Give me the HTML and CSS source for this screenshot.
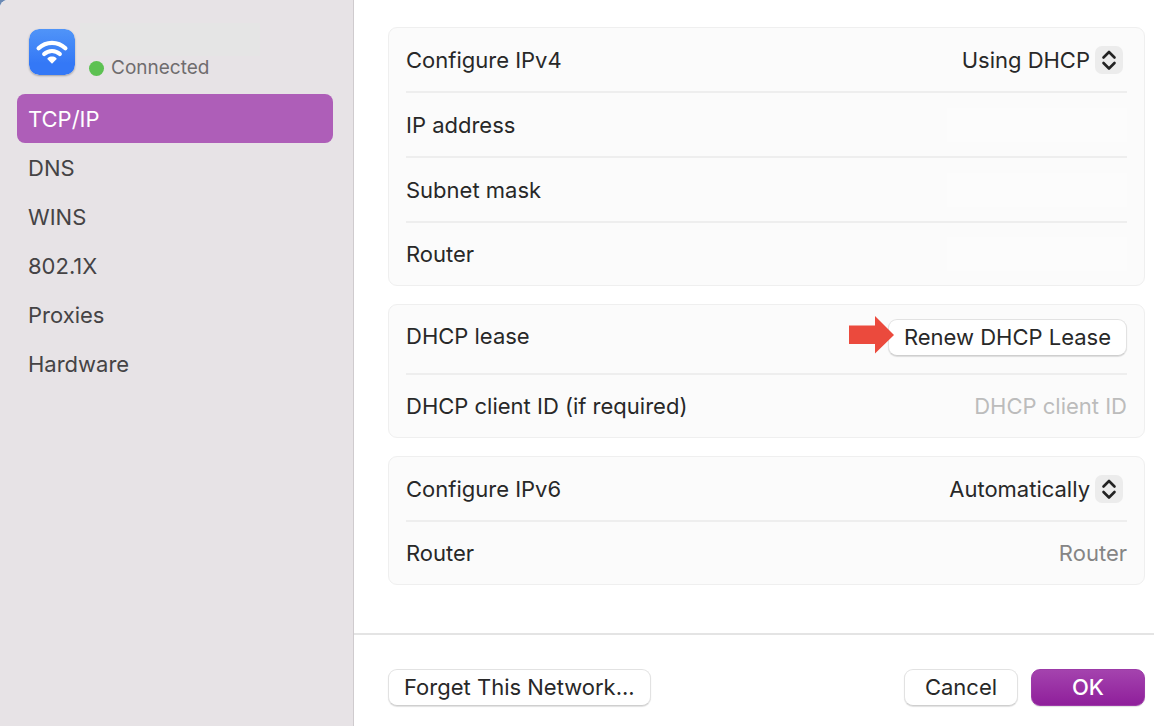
FILE: index.html
```html
<!DOCTYPE html>
<html lang="en">
<head>
    <meta charset="UTF-8">
    <meta name="viewport" content="width=device-width, initial-scale=1.0">
    <title>Wi-Fi - TCP/IP</title>
    <link rel="stylesheet" href="styles.css">
</head>
<body>
    <div class="window">
        <aside class="sidebar">
            <div class="network">
                <svg class="wifi-icon" viewBox="0 0 46 46" aria-hidden="true">
                    <defs>
                        <linearGradient id="wifiBlue" x1="0" y1="0" x2="0" y2="1">
                            <stop offset="0" stop-color="#5094f8"/>
                            <stop offset="0.75" stop-color="#3478f6"/>
                        </linearGradient>
                    </defs>
                    <rect width="46" height="46" rx="10" fill="url(#wifiBlue)"/>
                    <g fill="none" stroke="#fff" stroke-width="4.2" stroke-linecap="round">
                        <path d="M9.6 19.2a19.3 19.3 0 0 1 26.8 0"/>
                        <path d="M15.2 25.1a11.3 11.3 0 0 1 15.6 0"/>
                    </g>
                    <path d="M23 34.7l-4.200-4.200c-.5-.6-.5-1.200 0-1.600 2.400-1.800 6-1.800 8.400 0 .5.4.5 1 0 1.600z" fill="#fff"/>
                </svg>
                <div class="network-info">
                    <div class="network-name"></div>
                    <p class="status"><span class="status-dot"></span>Connected</p>
                </div>
            </div>

            <nav class="menu">
                <a href="#tcpip" class="active" aria-current="page">TCP/IP</a>
                <a href="#dns">DNS</a>
                <a href="#wins">WINS</a>
                <a href="#8021x">802.1X</a>
                <a href="#proxies">Proxies</a>
                <a href="#hardware">Hardware</a>
            </nav>
        </aside>

        <main class="main">
            <form class="settings" id="tcpip">
                <section class="panel">
                    <div class="row">
                        <label for="ipv4">Configure IPv4</label>
                        <div class="select">
                            <select id="ipv4">
                                <option>Using DHCP</option>
                            </select>
                            <svg class="chevrons" viewBox="0 0 28 28" aria-hidden="true">
                                <path d="M8.500 11.500L14 6l5.500 5.500M8.500 17l5.500 5.500 5.500-5.500"/>
                            </svg>
                        </div>
                    </div>
                    <div class="row">
                        <label for="ip">IP address</label>
                        <output id="ip" class="value"></output>
                    </div>
                    <div class="row">
                        <label for="subnet">Subnet mask</label>
                        <output id="subnet" class="value"></output>
                    </div>
                    <div class="row">
                        <label for="router4">Router</label>
                        <output id="router4" class="value"></output>
                    </div>
                </section>

                <section class="panel">
                    <div class="row lease">
                        <span>DHCP lease</span>
                        <div class="renew">
                            <svg class="arrow" viewBox="0 0 45 38" aria-hidden="true">
                                <path d="M0 9.500h26V0l19 19-19 18.500V28H0z"/>
                            </svg>
                            <button type="button" class="btn">Renew DHCP Lease</button>
                        </div>
                    </div>
                    <div class="row">
                        <label for="clientId">DHCP client ID (if required)</label>
                        <input type="text" id="clientId" placeholder="DHCP client ID">
                    </div>
                </section>

                <section class="panel">
                    <div class="row">
                        <label for="ipv6">Configure IPv6</label>
                        <div class="select">
                            <select id="ipv6">
                                <option>Automatically</option>
                            </select>
                            <svg class="chevrons" viewBox="0 0 28 28" aria-hidden="true">
                                <path d="M8.500 11.500L14 6l5.500 5.500M8.500 17l5.500 5.500 5.500-5.500"/>
                            </svg>
                        </div>
                    </div>
                    <div class="row">
                        <label for="router6">Router</label>
                        <output id="router6" class="muted">Router</output>
                    </div>
                </section>
            </form>

            <footer class="footer">
                <button type="button" class="btn forget">Forget This Network...</button>
                <button type="button" class="btn wide">Cancel</button>
                <button type="submit" form="tcpip" class="btn wide primary">OK</button>
            </footer>
        </main>
    </div>
</body>
</html>
```
FILE: styles.css
```css
* {
    box-sizing: border-box;
    margin: 0;
    padding: 0;
}

body {
    font-family: Inter, 'Liberation Sans', sans-serif;
    font-size: 22px;
    line-height: 28px;
    color: #282828;
    background: #6b8ab5;
}

.window {
    display: flex;
    min-height: 100vh;
    background: #fff;
    border-top-left-radius: 8px;
    overflow: hidden;
}

/* Sidebar */

.sidebar {
    flex: 0 0 354px;
    padding: 23px 20px 20px 17px;
    background: #e7e3e6;
    border-right: 1px solid #cfcbce;
}

.network {
    display: flex;
    align-items: flex-start;
    gap: 5px;
    padding: 0 12px;
    margin-bottom: 14px;
}

.wifi-icon {
    width: 46px;
    height: 46px;
    margin-top: 6px;
    border-radius: 10px;
    box-shadow: 0 1px 2px rgba(0,0,0,0.3);
}

.network-name {
    width: 180px;
    height: 33px;
    background: #e5e5e5;
}

.status {
    display: flex;
    align-items: center;
    gap: 7px;
    padding-left: 9px;
    font-size: 19px;
    line-height: 24px;
    color: #6f6c6e;
}

.status-dot {
    width: 15px;
    height: 15px;
    border-radius: 50%;
    background: #5dc152;
}

.menu a {
    display: block;
    padding: 11px 11px 10px;
    border-radius: 8px;
    color: #454345;
    text-decoration: none;
}

.menu a.active {
    background: #ae5eb8;
    color: #fff;
}

/* Settings */

.main {
    flex: 1;
    min-width: 0;
    display: flex;
    flex-direction: column;
}

.settings {
    flex: 1;
    display: flex;
    flex-direction: column;
    gap: 18px;
    padding: 27px 9px 27px 34px;
}

.panel {
    padding: 0 17px;
    background: #fbfbfb;
    border: 1px solid #efefef;
    border-radius: 9px;
}

.row {
    display: flex;
    align-items: center;
    justify-content: space-between;
    min-height: 65px;
    border-bottom: 2px solid #eee;
}

.row:last-child {
    min-height: 62px;
    border-bottom: none;
}

.row.lease {
    align-items: flex-start;
    padding: 14px 0 17px;
}

.lease span {
    padding-top: 3px;
}

.select {
    display: grid;
    align-items: center;
    margin-right: 4px;
}

.select select,
.chevrons {
    grid-area: 1 / 1;
}

select {
    appearance: none;
    padding-right: 33px;
    border: none;
    background: none;
    font: inherit;
    color: inherit;
    text-align-last: right;
}

.chevrons {
    justify-self: end;
    width: 28px;
    height: 28px;
    border-radius: 7px;
    background: #ececec;
    fill: none;
    stroke: #222;
    stroke-width: 2.600;
    stroke-linecap: round;
    stroke-linejoin: round;
    pointer-events: none;
}

.value {
    width: 180px;
    height: 34px;
    background: #fcfcfc;
}

.muted {
    color: #858585;
}

input[type="text"] {
    flex: 1;
    min-width: 0;
    border: none;
    background: none;
    font: inherit;
    color: inherit;
    text-align: right;
}

input::placeholder {
    color: #bcbcbc;
}

/* Buttons */

.btn {
    display: block;
    height: 37px;
    padding: 0 15px 2px;
    border: 1px solid #e2e2e2;
    border-bottom-color: #cfcfcf;
    border-radius: 9px;
    background: #fff;
    box-shadow: 0 1px 1px rgba(0,0,0,0.12);
    font: inherit;
    color: inherit;
    white-space: nowrap;
}

.btn.wide {
    min-width: 114px;
}

.btn.primary {
    border-color: #9c3aa8;
    background: linear-gradient(#a443ae, #8f1f9b);
    color: #fff;
    font-weight: 500;
}

.renew {
    position: relative;
}

/* Callout lying over the button's left edge */
.arrow {
    position: absolute;
    right: calc(100% - 6px);
    top: -3px;
    width: 45px;
    height: 38px;
    fill: #eb4a3d;
}

.footer {
    display: flex;
    gap: 13px;
    padding: 34px 9px 20px 34px;
    border-top: 2px solid #e4e4e4;
}

.forget {
    margin-right: auto;
}
```
